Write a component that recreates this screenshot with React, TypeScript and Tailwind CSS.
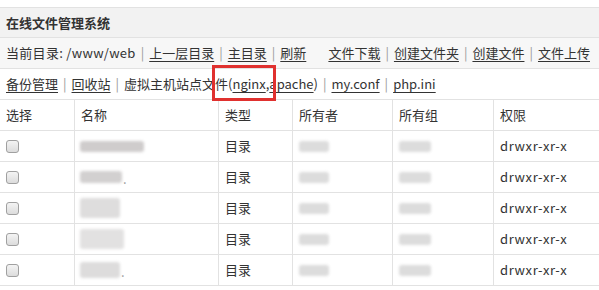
import React from "react";

const Sep = () => <span className="mx-[5px] text-[#999]">|</span>;
const L = ({ children }: { children: React.ReactNode }) => (
  <span className="underline underline-offset-[3px] decoration-1 text-[#333]">{children}</span>
);

const Blob = ({ w, h = 11, color = "#dcdcdc" }: { w: number; h?: number; color?: string }) => (
  <div className="rounded-[3px] blur-[1.5px]" style={{ width: w, height: h, background: color }} />
);

const Check = () => (
  <div className="w-[13px] h-[13px] rounded-[3px] border border-[#a0a0a0] bg-gradient-to-b from-[#f4f4f4] to-[#dcdcdc]" />
);

const rows = [
  { name: 64, nh: 11, nc: "#cfcccc", dot: false },
  { name: 42, nh: 12, nc: "#d2d0d0", dot: true },
  { name: 40, nh: 20, nc: "#dedddd", dot: false },
  { name: 44, nh: 20, nc: "#e2e1e1", dot: false },
  { name: 40, nh: 16, nc: "#dddcdc", dot: true },
];

const cell = "h-full flex items-center px-[6px] border-l border-[#e2e2e2]";

export default function App() {
  return (
    <div
      className="w-[599px] h-[290px] bg-white text-[13px] text-[#333] overflow-hidden relative"
      style={{ fontFamily: '"Noto Sans CJK SC", "Noto Sans", sans-serif' }}
    >
      <div className="pt-[7px]">
        <div className="h-[31px] border-t border-b border-[#e2e2e2] bg-[#f2f2f2] flex items-center px-[6px] font-bold">
          在线文件管理系统
        </div>
        <div className="h-[31px] border-b border-[#e2e2e2] bg-[#f7f7f7] flex items-center justify-between pl-[6px] pr-[9px]">
          <div className="flex items-center">
            <span className="tracking-[0.3px]">当前目录: /www/web</span>
            <Sep />
            <L>上一层目录</L>
            <Sep />
            <L>主目录</L>
            <Sep />
            <L>刷新</L>
          </div>
          <div className="flex items-center">
            <L>文件下载</L>
            <Sep />
            <L>创建文件夹</L>
            <Sep />
            <L>创建文件</L>
            <Sep />
            <L>文件上传</L>
          </div>
        </div>
        <div className="h-[31px] border-b border-[#e2e2e2] flex items-center px-[6px]">
          <L>备份管理</L>
          <Sep />
          <L>回收站</L>
          <Sep />
          <span>虚拟主机站点文件(</span>
          <L>nginx</L>
          <span>,</span>
          <L>apache</L>
          <span>)</span>
          <Sep />
          <L>my.conf</L>
          <Sep />
          <L>php.ini</L>
        </div>
        <div className="grid grid-cols-[74px_144px_74px_100px_101px_1fr] h-[31px] border-b border-[#e2e2e2] items-center">
          <div className="h-full flex items-center px-[6px]">选择</div>
          <div className={cell}>名称</div>
          <div className={cell}>类型</div>
          <div className={cell}>所有者</div>
          <div className={cell}>所有组</div>
          <div className={cell}>权限</div>
        </div>
        {rows.map((r, i) => (
          <div
            key={i}
            className="grid grid-cols-[74px_144px_74px_100px_101px_1fr] h-[31px] border-b border-[#e2e2e2] items-center"
          >
            <div className="h-full flex items-center px-[6px]">
              <Check />
            </div>
            <div className={`${cell} pl-[5px]`}>
              <Blob w={r.name} h={r.nh} color={r.nc} />
              {r.dot && <span className="text-[#999] ml-[1px] self-end mb-[7px] leading-none">.</span>}
            </div>
            <div className={cell}>目录</div>
            <div className={cell}>
              <Blob w={30} h={11} />
            </div>
            <div className={cell}>
              <Blob w={32} h={11} />
            </div>
            <div className={`${cell} tracking-[0.6px]`}>drwxr-xr-x</div>
          </div>
        ))}
      </div>
      <div className="absolute left-[212px] top-[65px] w-[64px] h-[36px] border-[3px] border-[#e0312f]" />
    </div>
  );
}
